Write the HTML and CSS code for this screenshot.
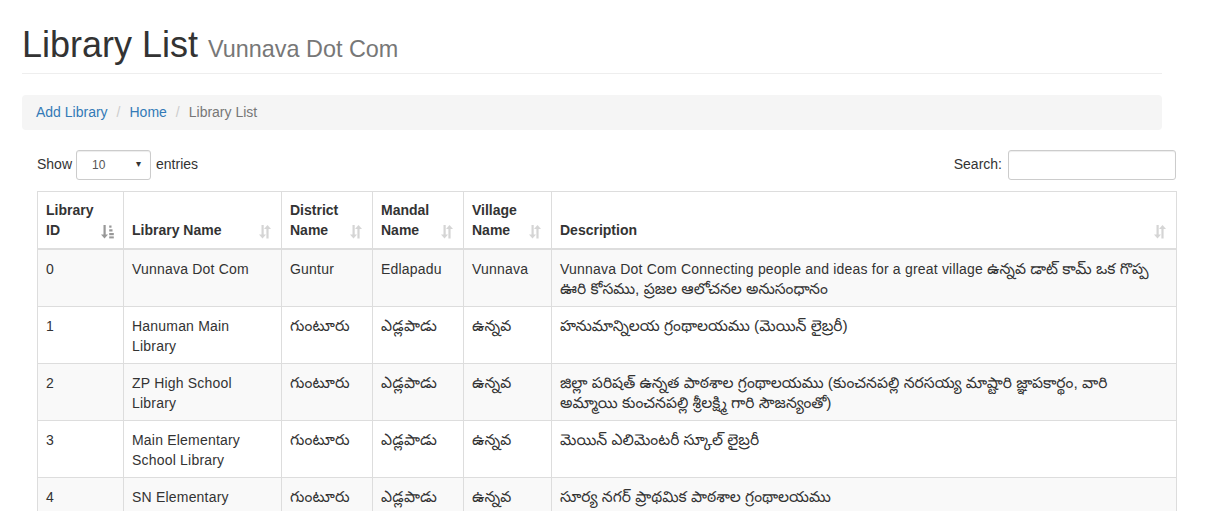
FILE: index.html
```html
<!DOCTYPE html>
<html lang="en">
<head>
<meta charset="utf-8">
<title>Library List</title>
<link rel="stylesheet" href="styles.css">
</head>
<body>
<div class="container">
  <div class="page-header">
    <h1>Library List <small>Vunnava Dot Com</small></h1>
  </div>
  <ol class="breadcrumb">
    <li><a href="#">Add Library</a></li>
    <li><a href="#">Home</a></li>
    <li class="active">Library List</li>
  </ol>
</div>
<div class="dt-wrapper">
  <div class="dt-top">
    <label class="dt-length">Show
      <span class="select-wrap">
        <select class="select-sm"><option>10</option><option>25</option><option>50</option><option>100</option></select>
        <span class="select-arrow">&#9662;</span>
      </span>
      entries</label>
    <label class="dt-filter">Search:<input type="search" class="input-sm"></label>
  </div>
  <table class="table">
    <colgroup>
      <col class="c1"><col class="c2"><col class="c3"><col class="c4"><col class="c5"><col class="c6">
    </colgroup>
    <thead>
      <tr>
        <th class="sort-asc">Library ID<svg class="sicon" viewBox="0 0 14 15"><path d="M3.5 1v9.5H1L4.5 14.5 8 10.5H5.7V1z"/><rect x="9.2" y="1.5" width="2.3" height="2.2"/><rect x="9.2" y="5.3" width="3.3" height="2.2"/><rect x="9.2" y="9" width="4.6" height="2.2"/><rect x="9.2" y="12.4" width="4.6" height="2"/></svg></th>
        <th class="sort">Library Name<svg class="sicon" viewBox="0 0 14 15"><path d="M3.5 1v9.5H1L4.5 14.5 8 10.5H5.7V1z"/><path d="M10.6 14.5V5h2.4L9.5 1 6 5h2.4v9.5z"/></svg></th>
        <th class="sort">District Name<svg class="sicon" viewBox="0 0 14 15"><path d="M3.5 1v9.5H1L4.5 14.5 8 10.5H5.7V1z"/><path d="M10.6 14.5V5h2.4L9.5 1 6 5h2.4v9.5z"/></svg></th>
        <th class="sort">Mandal Name<svg class="sicon" viewBox="0 0 14 15"><path d="M3.5 1v9.5H1L4.5 14.5 8 10.5H5.7V1z"/><path d="M10.6 14.5V5h2.4L9.5 1 6 5h2.4v9.5z"/></svg></th>
        <th class="sort">Village Name<svg class="sicon" viewBox="0 0 14 15"><path d="M3.5 1v9.5H1L4.5 14.5 8 10.5H5.7V1z"/><path d="M10.6 14.5V5h2.4L9.5 1 6 5h2.4v9.5z"/></svg></th>
        <th class="sort">Description<svg class="sicon" viewBox="0 0 14 15"><path d="M3.5 1v9.5H1L4.5 14.5 8 10.5H5.7V1z"/><path d="M10.6 14.5V5h2.4L9.5 1 6 5h2.4v9.5z"/></svg></th>
      </tr>
    </thead>
    <tbody>
      <tr>
        <td>0</td><td>Vunnava Dot Com</td><td>Guntur</td><td>Edlapadu</td><td>Vunnava</td>
        <td class="desc">Vunnava Dot Com Connecting people and ideas for a great village <span lang="te">ఉన్నవ డాట్ కామ్ ఒక గొప్ప ఊరి కోసము, ప్రజల ఆలోచనల అనుసంధానం</span></td>
      </tr>
      <tr>
        <td>1</td><td>Hanuman Main Library</td><td lang="te">గుంటూరు</td><td lang="te">ఎడ్లపాడు</td><td lang="te">ఉన్నవ</td>
        <td class="desc"><span lang="te">హనుమాన్నిలయ గ్రంథాలయము (మెయిన్ లైబ్రరీ)</span></td>
      </tr>
      <tr>
        <td>2</td><td>ZP High School Library</td><td lang="te">గుంటూరు</td><td lang="te">ఎడ్లపాడు</td><td lang="te">ఉన్నవ</td>
        <td class="desc"><span lang="te">జిల్లా పరిషత్ ఉన్నత పాఠశాల గ్రంథాలయము (కుంచనపల్లి నరసయ్య మాష్టారి జ్ఞాపకార్థం, వారి అమ్మాయి కుంచనపల్లి శ్రీలక్ష్మి గారి సౌజన్యంతో)</span></td>
      </tr>
      <tr>
        <td>3</td><td>Main Elementary School Library</td><td lang="te">గుంటూరు</td><td lang="te">ఎడ్లపాడు</td><td lang="te">ఉన్నవ</td>
        <td class="desc"><span lang="te">మెయిన్ ఎలిమెంటరీ స్కూల్ లైబ్రరీ</span></td>
      </tr>
      <tr>
        <td>4</td><td>SN Elementary School Library</td><td lang="te">గుంటూరు</td><td lang="te">ఎడ్లపాడు</td><td lang="te">ఉన్నవ</td>
        <td class="desc"><span lang="te">సూర్య నగర్ ప్రాథమిక పాఠశాల గ్రంథాలయము</span></td>
      </tr>
    </tbody>
  </table>
</div>
</body>
</html>
```
FILE: styles.css
```css
* { box-sizing: border-box; }
html, body { margin: 0; padding: 0; }
body {
  font-family: "Liberation Sans", Arial, "Noto Sans Telugu", "Noto Sans", sans-serif;
  font-size: 14px;
  line-height: 1.42857;
  color: #333;
  background: #fff;
  overflow: hidden;
}
.container {
  margin-left: 22px;
  width: 1140px;
}
.page-header {
  padding-top: 25px;
  padding-bottom: 8px;
  border-bottom: 1px solid #eee;
}
.page-header h1 {
  margin: 0;
  font-size: 36px;
  font-weight: 500;
  line-height: 1.1;
  color: #333;
}
.page-header h1 small {
  font-size: 65%;
  font-weight: 400;
  color: #777;
}
.breadcrumb {
  list-style: none;
  margin: 21px 0 20px;
  padding: 8px 14px 7px;
  background: #f5f5f5;
  border-radius: 4px;
  display: flex;
}
.breadcrumb li + li::before {
  content: "/";
  padding: 0 9px;
  color: #ccc;
}
.breadcrumb a {
  color: #337ab7;
  text-decoration: none;
}
.breadcrumb .active { color: #777; }
.dt-wrapper {
  margin-left: 37px;
  width: 1139px;
}
.dt-top {
  display: flex;
  justify-content: space-between;
  align-items: center;
  height: 30px;
}
.dt-length, .dt-filter {
  font-weight: 400;
  display: flex;
  align-items: center;
  white-space: nowrap;
}
.select-wrap {
  position: relative;
  display: inline-block;
  margin: 0 5px 0 4px;
}
.select-sm {
  -webkit-appearance: none;
  appearance: none;
  width: 75px;
  height: 30px;
  padding: 5px 10px 5px 15px;
  font-family: "Liberation Sans", Arial, sans-serif;
  font-size: 12px;
  color: #555;
  background: #fff;
  border: 1px solid #ccc;
  border-radius: 3px;
  box-shadow: inset 0 1px 1px rgba(0,0,0,.075);
  display: block;
}
.select-arrow {
  position: absolute;
  right: 10px;
  top: 7px;
  font-size: 10px;
  color: #333;
  pointer-events: none;
}
.input-sm {
  width: 168px;
  height: 30px;
  margin-left: 6px;
  padding: 5px 10px;
  font-size: 12px;
  border: 1px solid #ccc;
  border-radius: 3px;
  box-shadow: inset 0 1px 1px rgba(0,0,0,.075);
}
.table {
  width: 1139px;
  margin-top: 11px;
  border-collapse: collapse;
  table-layout: fixed;
  border: 1px solid #ddd;
}
.c1 { width: 86px; }
.c2 { width: 158px; }
.c3 { width: 91px; }
.c4 { width: 91px; }
.c5 { width: 88px; }
.c6 { width: 625px; }
.table th, .table td {
  border: 1px solid #ddd;
  padding: 8px;
  line-height: 20px;
  text-align: left;
}
.table th {
  vertical-align: bottom;
  border-bottom-width: 2px;
  font-weight: 700;
  position: relative;
  padding-right: 30px;
}
.table td {
  vertical-align: top;
  padding: 9px 8px 7px;
  letter-spacing: 0.2px;
}
.table tbody tr:nth-child(odd) { background: #f9f9f9; }
:lang(te) {
  font-size: 15.5px;
  letter-spacing: 0;
}
.desc :lang(te) { line-height: 1; }
.sicon {
  position: absolute;
  right: 9px;
  bottom: 9px;
  width: 14px;
  height: 15px;
  fill: #333;
  opacity: 0.2;
}
.sort-asc .sicon { opacity: 0.5; }
```
